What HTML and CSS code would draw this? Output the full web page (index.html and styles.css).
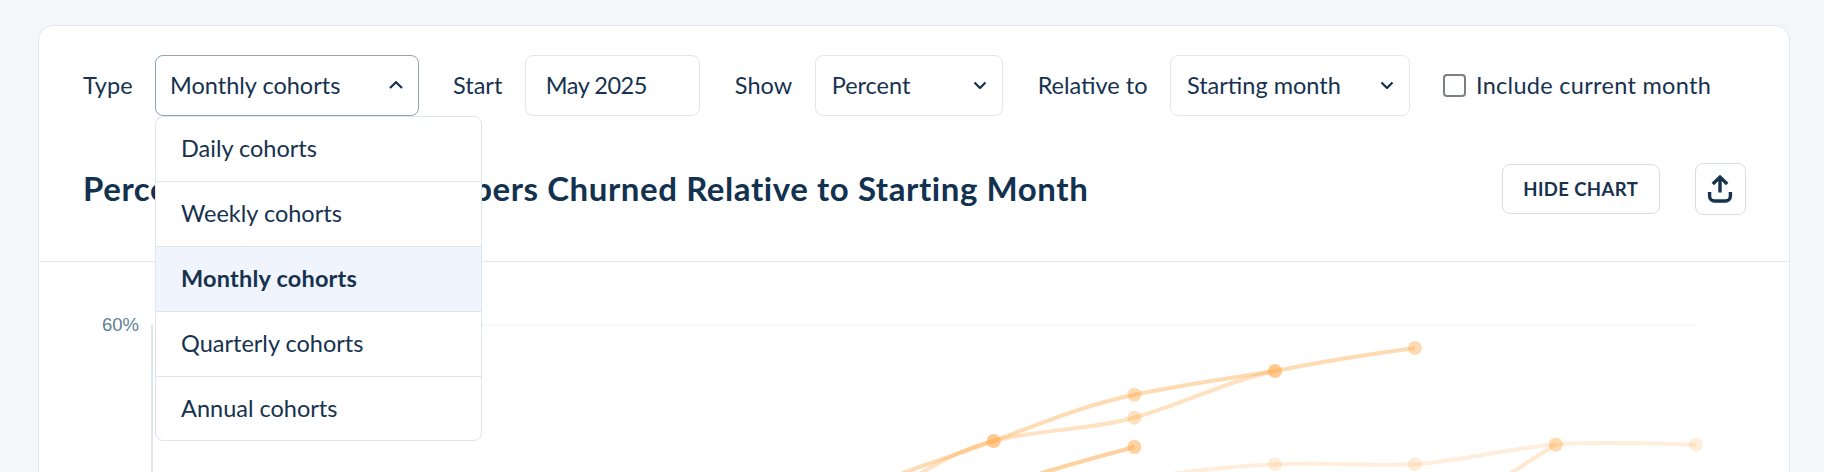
FILE: index.html
```html
<!DOCTYPE html>
<html lang="en">
<head>
<meta charset="utf-8">
<title>Cohorts</title>
<link rel="stylesheet" href="styles.css">
</head>
<body>
<main class="card">
  <section class="filters">
    <span class="label">Type</span>
    <div class="dropdown">
      <div class="control control-open type-control">
        <span>Monthly cohorts</span>
        <svg class="chevron" viewBox="0 0 14 8"><path d="M1 7 7 1.2 13 7"/></svg>
      </div>
      <ul class="menu">
        <li>Daily cohorts</li>
        <li>Weekly cohorts</li>
        <li class="selected">Monthly cohorts</li>
        <li>Quarterly cohorts</li>
        <li>Annual cohorts</li>
      </ul>
    </div>
    <span class="label label-next">Start</span>
    <div class="control start-control"><span>May 2025</span></div>
    <span class="label label-next">Show</span>
    <div class="control show-control">
      <span>Percent</span>
      <svg class="chevron" viewBox="0 0 14 8"><path d="M1.5 1.5 7 7 12.5 1.5"/></svg>
    </div>
    <span class="label label-next">Relative to</span>
    <div class="control relative-control">
      <span>Starting month</span>
      <svg class="chevron" viewBox="0 0 14 8"><path d="M1.5 1.5 7 7 12.5 1.5"/></svg>
    </div>
    <label class="check">
      <span class="box"></span>
      <span class="check-text">Include current month</span>
    </label>
  </section>
  <header class="heading">
    <h1>Percent of Cohort Subscribers Churned Relative to Starting Month</h1>
    <button class="hide-btn" type="button">HIDE CHART</button>
    <button class="export-btn" type="button" aria-label="Export">
      <svg viewBox="0 0 26 30"><path d="M13 4V18.5M5.8 10 13 3l7.2 7M2.6 18V22a5 5 0 0 0 5 5H18.4a5 5 0 0 0 5-5V18"/></svg>
    </button>
  </header>
  <div class="chart">
    <svg class="plot" viewBox="39 262 1750 260">
      <text class="tick" x="139" y="331" text-anchor="end">60%</text>
      <path class="axis" d="M152 325V522"/>
      <path class="grid" d="M152 325.3H1696"/>
      <g class="s s1">
        <path d="M880 482C920 466 955 455 993.7 441C1045 422 1085 405 1134.4 394.7C1185 384 1225 379 1275 371C1325 361 1370 354 1415 348"/>
        <circle cx="993.7" cy="441" r="7"/><circle cx="1134.4" cy="394.7" r="7"/><circle cx="1275" cy="371" r="7"/><circle cx="1415" cy="348" r="7"/>
      </g>
      <g class="s s2">
        <path d="M905 482C945 459 965 448 993.7 441C1040 429 1090 430 1134.4 417.7C1185 403 1225 382 1275 371"/>
        <circle cx="993.7" cy="441" r="7"/><circle cx="1134.4" cy="417.7" r="7"/><circle cx="1275" cy="371" r="7"/>
      </g>
      <g class="s s3">
        <path d="M1000 487C1040 472 1090 459 1134.4 447"/>
        <circle cx="1134.4" cy="447" r="7"/>
      </g>
      <g class="s s4">
        <path d="M1135 480C1180 472 1230 466 1275 464.3C1320 462.5 1370 466 1415 464.3C1465 460 1510 448 1555.8 444.5C1600 441.5 1650 443.5 1696 444.7"/>
        <circle cx="1275" cy="464.3" r="7"/><circle cx="1415" cy="464.3" r="7"/><circle cx="1555.8" cy="444.5" r="7"/><circle cx="1696" cy="444.7" r="7"/>
      </g>
      <g class="s s5">
        <path d="M1495 484C1520 466 1540 455 1555.8 444.5"/>
        <circle cx="1555.8" cy="444.5" r="7"/>
      </g>
    </svg>
  </div>
</main>
</body>
</html>
```
FILE: styles.css
```css
* { box-sizing: border-box; }
html, body { height: 472px; margin: 0; overflow: hidden; }
body {
  background: #f4f6fa;
  color: #16324f;
  font-family: "Lato", "Noto Sans", sans-serif;
  font-size: 23.5px;
}
.card {
  margin: 25px 34px 0 38px;
  height: 560px;
  background: #fff;
  border: 1px solid #e2e6ee;
  border-radius: 15px;
}
.filters {
  display: flex;
  align-items: center;
  padding: 29px 0 0 44px;
}
.label { margin-right: 22.5px; margin-bottom: 1px; }
.label-next { margin-left: 34.5px; }
.dropdown { position: relative; }
.control {
  display: flex;
  align-items: center;
  justify-content: space-between;
  height: 60.5px;
  background: #fff;
  border: 1px solid #e2e6ee;
  border-radius: 8px;
  padding: 0 15px 0 14px;
}
.control span { margin-bottom: 1px; }
.control-open { border-color: #8fa3b5; }
.type-control { width: 263.5px; }
.start-control { width: 175.5px; padding-left: 20px; letter-spacing: -.5px; }
.show-control { width: 188.5px; padding-left: 16px; }
.relative-control { width: 240px; padding-left: 16px; }
.chevron {
  width: 14px;
  height: 8px;
  fill: none;
  stroke: #16324f;
  stroke-width: 2.2;
}
.menu {
  position: absolute;
  top: 61px;
  left: 0;
  z-index: 2;
  width: 326.5px;
  margin: 0;
  padding: 0;
  list-style: none;
  background: #fff;
  border: 1px solid #dfe5ee;
  border-radius: 8px;
  overflow: hidden;
}
.menu li {
  height: 64.9px;
  padding-left: 25px;
  line-height: 63px;
  border-bottom: 1px solid #dfe5ee;
}
.menu li:last-child { border-bottom: 0; height: 63.5px; }
.menu .selected { background: #f0f5fd; font-weight: 700; letter-spacing: .2px; }
.check {
  display: flex;
  align-items: center;
  gap: 9.5px;
  margin-left: 33.5px;
}
.check-text { letter-spacing: .3px; margin-bottom: 1px; }
.box {
  width: 23px;
  height: 23px;
  border: 2px solid #7b7f85;
  border-radius: 4px;
  background: #fff;
}
.heading {
  display: flex;
  align-items: flex-end;
  height: 146.5px;
  padding: 0 43px 46px 44px;
  border-bottom: 1px solid #e4e6f0;
}
h1 {
  flex: 1;
  margin: 0 0 5px;
  font-size: 33px;
  line-height: 44px;
  letter-spacing: .58px;
  font-weight: 700;
  color: #12324f;
  white-space: nowrap;
}
.hide-btn {
  width: 157.5px;
  height: 50.5px;
  margin: 0 35px 1px 0;
  padding: 0;
  font: 700 18.5px "Lato", sans-serif;
  letter-spacing: .4px;
  color: #16324f;
  background: #fff;
  border: 1px solid #d8dee6;
  border-radius: 8px;
}
.export-btn {
  display: flex;
  align-items: center;
  justify-content: center;
  width: 51.5px;
  height: 52.5px;
  padding: 0;
  background: #fff;
  border: 1px solid #d8dee6;
  border-radius: 8px;
}
.export-btn svg {
  width: 26px;
  height: 30px;
  fill: none;
  stroke: #16324f;
  stroke-width: 3.4;
}
.chart { height: 260px; }
.plot { display: block; width: 1750px; height: 260px; }
.tick { font: 18.5px "Liberation Sans", sans-serif; fill: #5f7f96; }
.axis { stroke: #dde5ef; stroke-width: 2; fill: none; }
.grid { stroke: #e3e6ec; stroke-width: 1; stroke-dasharray: 1.5 1.5; fill: none; }
.s path { fill: none; stroke: #ffa94d; stroke-width: 4; }
.s circle { fill: #ffa94d; }
.s1 path, .s1 circle { opacity: .42; }
.s2 path, .s2 circle { opacity: .34; }
.s3 path, .s3 circle { opacity: .52; }
.s4 path, .s4 circle { opacity: .2; }
.s5 path, .s5 circle { opacity: .27; }
```
